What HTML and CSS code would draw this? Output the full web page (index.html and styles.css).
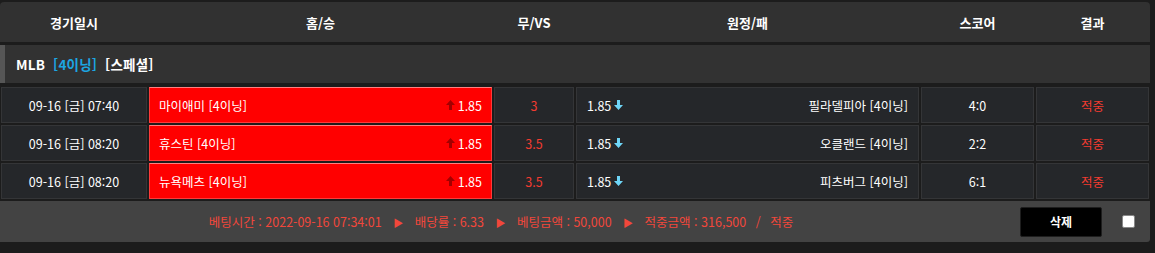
FILE: index.html
```html
<!DOCTYPE html>
<html lang="ko">
<head>
<meta charset="utf-8">
<link rel="stylesheet" href="styles.css">
</head>
<body>
<div class="board">
  <div class="head">
    <div>경기일시</div>
    <div>홈/승</div>
    <div>무/VS</div>
    <div>원정/패</div>
    <div>스코어</div>
    <div>결과</div>
  </div>
  <div class="league">MLB <span class="cyan">[4이닝]</span> [스페셜]</div>
  <div class="rows">
    <div class="row">
      <div class="cell">09-16 [금] 07:40</div>
      <div class="cell home"><span>마이애미 [4이닝]</span><span class="odd"><svg class="up" width="9" height="10" viewBox="0 0 9 10"><path d="M4.5 0 L9 5 L6 5 L6 10 L3 10 L3 5 L0 5 Z"/></svg>1.85</span></div>
      <div class="cell red">3</div>
      <div class="cell away"><span class="odd">1.85<svg class="down" width="9" height="10" viewBox="0 0 9 10"><path d="M4.5 10 L9 5 L6 5 L6 0 L3 0 L3 5 L0 5 Z"/></svg></span><span>필라델피아 [4이닝]</span></div>
      <div class="cell">4:0</div>
      <div class="cell red">적중</div>
    </div>
    <div class="row">
      <div class="cell">09-16 [금] 08:20</div>
      <div class="cell home"><span>휴스틴 [4이닝]</span><span class="odd"><svg class="up" width="9" height="10" viewBox="0 0 9 10"><path d="M4.5 0 L9 5 L6 5 L6 10 L3 10 L3 5 L0 5 Z"/></svg>1.85</span></div>
      <div class="cell red">3.5</div>
      <div class="cell away"><span class="odd">1.85<svg class="down" width="9" height="10" viewBox="0 0 9 10"><path d="M4.5 10 L9 5 L6 5 L6 0 L3 0 L3 5 L0 5 Z"/></svg></span><span>오클랜드 [4이닝]</span></div>
      <div class="cell">2:2</div>
      <div class="cell red">적중</div>
    </div>
    <div class="row">
      <div class="cell">09-16 [금] 08:20</div>
      <div class="cell home"><span>뉴욕메츠 [4이닝]</span><span class="odd"><svg class="up" width="9" height="10" viewBox="0 0 9 10"><path d="M4.5 0 L9 5 L6 5 L6 10 L3 10 L3 5 L0 5 Z"/></svg>1.85</span></div>
      <div class="cell red">3.5</div>
      <div class="cell away"><span class="odd">1.85<svg class="down" width="9" height="10" viewBox="0 0 9 10"><path d="M4.5 10 L9 5 L6 5 L6 0 L3 0 L3 5 L0 5 Z"/></svg></span><span>피츠버그 [4이닝]</span></div>
      <div class="cell">6:1</div>
      <div class="cell red">적중</div>
    </div>
  </div>
  <div class="foot">
    <div class="info">베팅시간 : 2022-09-16 07:34:01 <span class="tri">▶</span> 배당률 : 6.33 <span class="tri">▶</span> 베팅금액 : 50,000 <span class="tri">▶</span> 적중금액 : 316,500 <span class="slash">/</span> 적중</div>
    <button class="del">삭제</button>
    <span class="check"></span>
  </div>
</div>
</body>
</html>
```

FILE: styles.css
```css
html, body {
  margin: 0;
  padding: 0;
  background: #1c1c1c;
}
body {
  font-family: "Noto Sans CJK KR", "Noto Sans", sans-serif;
  font-size: 12.5px;
  color: #ffffff;
}
.board {
  width: 1150px;
  padding-top: 2px;
}
.head {
  display: grid;
  grid-template-columns: 146px 343px 80px 343px 113px 113px;
  column-gap: 2px;
  padding-left: 1px;
  height: 40px;
  background: #313131;
  border-radius: 4px 4px 0 0;
  font-weight: bold;
  font-size: 13px;
}
.head div {
  display: flex;
  align-items: center;
  justify-content: center;
}
.league {
  margin-top: 3px;
  height: 38px;
  background: #323232;
  border-left: 5px solid #565656;
  box-sizing: border-box;
  padding-left: 11px;
  display: flex;
  align-items: center;
  gap: 4px;
  font-weight: bold;
  font-size: 13.5px;
  letter-spacing: 0.2px;
  white-space: pre;
}
.cyan {
  color: #1ca6e2;
}
.rows {
  margin-top: 4px;
  display: flex;
  flex-direction: column;
  gap: 2px;
  padding-left: 1px;
}
.row {
  display: grid;
  grid-template-columns: 146px 343px 80px 343px 113px 113px;
  column-gap: 2px;
  height: 36px;
}
.cell {
  background: #25272a;
  border: 1px solid #343537;
  box-sizing: border-box;
  display: flex;
  align-items: center;
  justify-content: center;
}
.cell.red {
  color: #f23b30;
}
.cell.home {
  background: #ff0000;
  border: 1px solid #ff3a3a;
  border-top-color: #ff8080;
  justify-content: space-between;
  padding: 0 9px 0 9px;
}
.cell.away {
  justify-content: space-between;
  padding: 0 10px 0 10px;
}
.odd {
  display: flex;
  align-items: center;
  gap: 3px;
}
.up {
  fill: #a30000;
}
.down {
  fill: #6fd6f7;
}
.foot {
  margin-top: 2px;
  height: 41px;
  background: #434343;
  border-radius: 0 0 3px 0;
  display: flex;
  align-items: center;
  color: #f2473b;
}
.info {
  flex: 1;
  text-align: center;
  padding-left: 2px;
}
.tri {
  font-size: 10px;
  margin: 0 8px;
}
.slash {
  margin: 0 6px;
}
.del {
  width: 82px;
  height: 30px;
  background: #000;
  border: 1px solid #1e1e1e;
  border-radius: 2px;
  color: #fff;
  font-family: inherit;
  font-weight: bold;
  font-size: 12px;
  margin-right: 20px;
  margin-left: 20px;
}
.check {
  width: 13px;
  height: 13px;
  box-sizing: border-box;
  background: #fff;
  border: 1px solid #888;
  border-radius: 2px;
  margin-right: 15px;
}
```
